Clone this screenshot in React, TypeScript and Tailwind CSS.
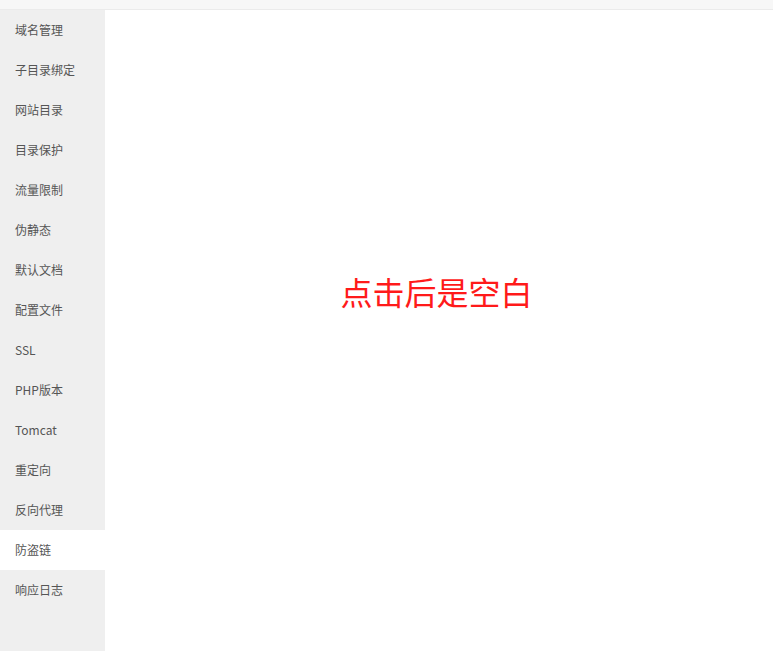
const items = [
  "域名管理",
  "子目录绑定",
  "网站目录",
  "目录保护",
  "流量限制",
  "伪静态",
  "默认文档",
  "配置文件",
  "SSL",
  "PHP版本",
  "Tomcat",
  "重定向",
  "反向代理",
  "防盗链",
  "响应日志",
];

export default function App() {
  const active = "防盗链";
  return (
    <div
      className="w-[773px] h-[651px] flex flex-col bg-white overflow-hidden"
      style={{ fontFamily: '"Microsoft YaHei", "Noto Sans CJK SC", sans-serif' }}
    >
      <div className="h-[10px] bg-[#f7f7f7] border-b border-[#ebebeb]" />
      <div className="flex flex-1">
        {/* left menu */}
        <div className="w-[105px] bg-[#efefef] flex flex-col">
          {items.map((item) => (
            <div
              key={item}
              className={`h-[40px] flex items-center pl-[15px] text-[12px] text-[#555] ${
                item === active ? "bg-white" : ""
              }`}
            >
              {item}
            </div>
          ))}
        </div>

        {/* content */}
        <div className="flex-1 flex justify-center pt-[253px]">
          <div className="text-[32px] leading-[56px] text-[#ff1a1a] -ml-[5px]">点击后是空白</div>
        </div>
      </div>
    </div>
  );
}
